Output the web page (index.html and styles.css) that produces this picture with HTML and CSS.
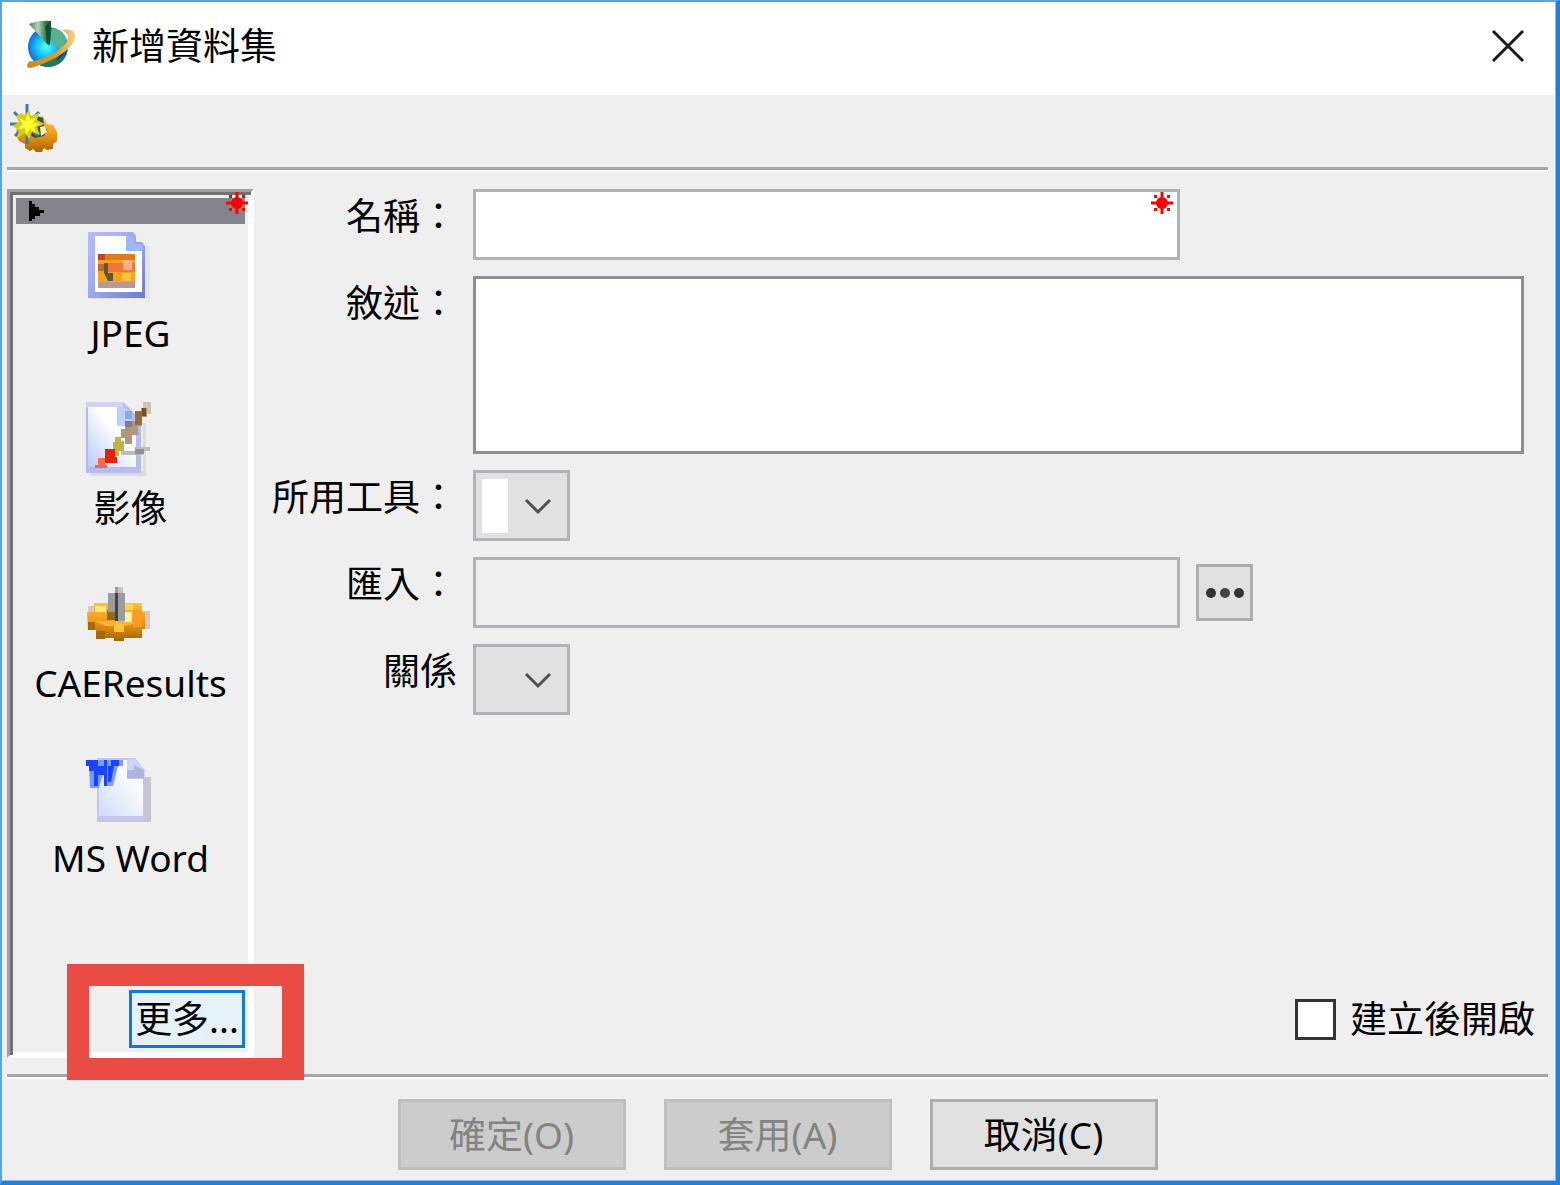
FILE: index.html
```html
<!DOCTYPE html>
<html lang="zh-Hant">
<head>
    <meta charset="UTF-8">
    <title>新增資料集</title>
    <link rel="stylesheet" href="styles.css">
</head>
<body>
<form class="dialog">
    <header class="titlebar">
        <svg class="app-icon" width="54" height="54" viewBox="0 0 54 54">
            <defs>
                <radialGradient id="globe" cx="45%" cy="50%" r="60%">
                    <stop offset="0" stop-color="#5ffaff"/>
                    <stop offset=".4" stop-color="#12c4f5"/>
                    <stop offset=".8" stop-color="#0a62d8"/>
                    <stop offset="1" stop-color="#0a3f98"/>
                </radialGradient>
                <linearGradient id="ring">
                    <stop offset="0" stop-color="#c98a20"/>
                    <stop offset=".6" stop-color="#dc9a28"/>
                    <stop offset="1" stop-color="#f8d08c"/>
                </linearGradient>
                <linearGradient id="cone">
                    <stop offset="0" stop-color="#3d7d50"/>
                    <stop offset=".4" stop-color="#b4d2b8"/>
                    <stop offset=".7" stop-color="#4f8a5c"/>
                    <stop offset="1" stop-color="#0d4a25"/>
                </linearGradient>
            </defs>
            <circle cx="24" cy="28" r="20" fill="url(#globe)"/>
            <path d="M28 9q11 1 15 12l-6 9-8-4-3-9z" fill="#55b48c"/>
            <path d="M15 44q12-2 20-9l6 2q-8 12-19 11z" fill="#227a50"/>
            <path d="M32 42q7-4 10-12l-6 5z" fill="#0a3f98"/>
            <path d="M38 11q13-2 13 6 0 10-18 21-17 9-27 11l-3-1q0-4 3-6 6 1 20-6 18-10 18-18 0-4-6-7z" fill="url(#ring)"/>
            <path d="M5 5q10-4 22-3l-1 24-3-1z" fill="url(#cone)"/>
            <path d="M21 7l6-5-1 24-3-1z" fill="#0f5229"/>
        </svg>
        <h1>新增資料集</h1>
        <button type="button" class="close" aria-label="關閉">
            <svg width="34" height="34" viewBox="0 0 34 34">
                <path d="M2 2l30 30M32 2L2 32" stroke="#1c1c1c" stroke-width="3"/>
            </svg>
        </button>
    </header>

    <div class="toolbar">
        <svg width="50" height="50" viewBox="0 0 50 50">
            <defs>
                <linearGradient id="gold" x2="0" y2="1">
                    <stop offset="0" stop-color="#ffc536"/>
                    <stop offset=".5" stop-color="#f09a18"/>
                    <stop offset="1" stop-color="#a86405"/>
                </linearGradient>
            </defs>
            <path d="M8 22l8-5 18-5 4 8 6 1 4 7v9l-4 3v5l-6 1-3-2-2 4h-6l-3-3-3 2-5-3v-4l-6-3-3-6z" fill="url(#gold)"/>
            <path d="M28 12l6 2 1 7 3 5-3 6-9 2-8-5z" fill="#344e58"/>
            <path d="M31 23l5-1 2 6-6 4z" fill="#fff4b5"/>
            <path d="M18 0v40M1 20h34M5 8l24 24M30 8L6 32" stroke="#397daa" stroke-width="3"/>
            <path d="M12 9l4 2 4-5 2 6 8-3-2 7 7 4-7 3 3 8-8-3-3 7-4-6-8 5 2-8-7-4 7-4-3-6z" fill="#d8ce1a"/>
            <path d="M19 9l2 7 6-3-3 6 7 1-6 3 2 6-6-4-4 6-1-7-7 1 5-5-4-6 6 3z" fill="#ffff30"/>
        </svg>
    </div>

    <main class="content">
        <aside class="types">
            <div class="types-head">
                <svg width="18" height="20" viewBox="0 0 18 20">
                    <path d="M1 0h3v3h3v3h4v3h5v3h-4v3H7v3H4v2H1z" fill="#000"/>
                </svg>
                <svg class="required" width="22" height="22" viewBox="0 0 22 22">
                    <path d="M11 0v22M0 11h22" stroke="#f00" stroke-width="3"/>
                    <path d="M3 3h3v3H3zM16 3h3v3h-3zM3 16h3v3H3zM16 16h3v3h-3z" fill="#f00"/>
                    <circle cx="11" cy="11" r="6" fill="#f00"/>
                </svg>
            </div>
            <ul class="type-list">
                <li>
                    <svg width="92" height="82" viewBox="0 0 92 82">
                        <defs>
                            <linearGradient id="frame" x2="1" y2="1">
                                <stop offset="0" stop-color="#b9bcfa"/>
                                <stop offset=".5" stop-color="#9ba6f2"/>
                                <stop offset="1" stop-color="#6c7cc4"/>
                            </linearGradient>
                        </defs>
                        <path d="M58 20h7v53H8v-3h50z" fill="#e4e4e6"/>
                        <path d="M3 6h45l3 4v6h6l3 4v52H3z" fill="url(#frame)"/>
                        <path d="M10 10h31v15h16v41H10z" fill="#fff"/>
                        <path d="M41 10h8v8h9v7H41z" fill="#9db8f8"/>
                        <path d="M13 28h37v34H13z" fill="#f7a21c"/>
                        <path d="M13 28h37v6H13z" fill="#df7d1c"/>
                        <path d="M13 28h7v6h-7z" fill="#c2442c"/>
                        <path d="M13 38h8v7h-8z" fill="#c86c1c"/>
                        <path d="M23 37h27v9H23z" fill="#f2763a"/>
                        <path d="M38 34h9v10h-9z" fill="#fab090"/>
                        <path d="M19 37h4v10h5v8h-5l-4-8z" fill="#5c5840"/>
                        <path d="M37 47h9v8h-9z" fill="#fcc044"/>
                        <path d="M13 56h37v6H13z" fill="#b99a90"/>
                    </svg>
                    <span>JPEG</span>
                </li>
                <li>
                    <svg width="92" height="82" viewBox="0 0 92 82">
                        <defs>
                            <linearGradient id="paper" x1="1" y1="0" x2="0" y2="1">
                                <stop offset=".4" stop-color="#fff"/>
                                <stop offset="1" stop-color="#bccbfa"/>
                            </linearGradient>
                        </defs>
                        <path d="M4 70h54V22h3v53H6z" fill="#dcdce0"/>
                        <path d="M1 1h37l18 18v53H1z" fill="#b4bcf0"/>
                        <path d="M1 1h37v5H1z" fill="#d2d4f6"/>
                        <path d="M3 6h32v18h16v42H3z" fill="url(#paper)"/>
                        <path d="M32 6h6l9 5v14H32z" fill="#b9cffc"/>
                        <path d="M40 10h7v8h-7z" fill="#8aa9df"/>
                        <path d="M36 50h14v-4h15v4h-7v4H36z" fill="#bcbcc0"/>
                        <path d="M50 48h9v5h-9z" fill="#909094"/>
                        <path d="M58 1h8v12h-8z" fill="#cdc2b6"/>
                        <path d="M50 10h6V7h6v9h-5v9h-4v9h-6v9h-7v-6h-4v-9h4v-8h10z" fill="#b4957c"/>
                        <path d="M50 10h7v14h-7z" fill="#986a3e"/>
                        <path d="M57 7h4v8h-4z" fill="#7c4c22"/>
                        <path d="M40 20h7v6h-7z" fill="#807a98"/>
                        <path d="M30 36h6v4h3v10h-5v5h-6V41h2z" fill="#bcb545"/>
                        <path d="M20 48h10v8h2v6H20z" fill="#e62208"/>
                        <path d="M13 57h7v8h-7z" fill="#fb6b45"/>
                        <path d="M10 64h12v3H10z" fill="#ef6060"/>
                    </svg>
                    <span>影像</span>
                </li>
                <li>
                    <svg width="92" height="82" viewBox="0 -10 92 82">
                        <path d="M3 20h6v22H3zM56 25h9v18h-7z" fill="#d3c8c4"/>
                        <path d="M2 26h7v-9h14v-2h12v2h22v9h3v17h-3v9H39v3H29v-3H11V44H3z" fill="url(#gold)"/>
                        <path d="M10 20h11v6H10z" fill="#ffe871"/>
                        <path d="M3 36h7v8H3zM11 45h9v8h-9z" fill="#a16a0b"/>
                        <path d="M10 35h38v3l-9 2H21z" fill="#f3b832"/>
                        <path d="M22 24h11v10H22z" fill="#8d6d24"/>
                        <path d="M39 18h9v6h-9z" fill="#ffd540"/>
                        <path d="M39 26h8v10h-8z" fill="#fff3a0"/>
                        <path d="M48 24h9v17h-9z" fill="#fa9c24"/>
                        <path d="M29 38h10v8H29z" fill="#ffc53a"/>
                        <path d="M23 7h7V1h8v6h2v28H30v-9h-7z" fill="#9b9b9d"/>
                        <path d="M30 7h3v28h-3z" fill="#444"/>
                        <path d="M33 1h5v6h-5z" fill="#c3c3c5"/>
                    </svg>
                    <span>CAEResults</span>
                </li>
                <li>
                    <svg width="92" height="82" viewBox="0 0 92 82">
                        <defs>
                            <linearGradient id="page" x1="1" y1="0" x2="0" y2="1">
                                <stop offset=".3" stop-color="#fbfbff"/>
                                <stop offset="1" stop-color="#cddcfa"/>
                            </linearGradient>
                        </defs>
                        <path d="M58 26h8v45h-8z" fill="#c7c7cb"/>
                        <path d="M12 7h38l10 12v52H12z" fill="#c5c6ea"/>
                        <path d="M14 9h28v19h16v37H14z" fill="url(#page)"/>
                        <path d="M42 8h8l10 11v8H42z" fill="#ccd2f8"/>
                        <path d="M49 14l10 5v8H42v-8h7z" fill="#adb4de"/>
                        <path d="M1 9h37v6h-5l-5 20h-7l-3-12-4 14H5L4 15H1z" fill="#7a9afc"/>
                        <path d="M1 9h12v6h6V9h3v26h-3V24h-6v11H9V20H4v-5H1zM26 9h8v6h-5l-3 16h-3V15h3z" fill="#1a44fb"/>
                    </svg>
                    <span>MS Word</span>
                </li>
            </ul>
            <div class="more">
                <button type="button">更多...</button>
                <div class="highlight"></div>
            </div>
        </aside>

        <section class="details">
            <div class="fields">
                <label for="name">名稱：</label>
                <div class="name-field">
                    <input type="text" id="name">
                    <svg class="required" width="22" height="22" viewBox="0 0 22 22">
                        <path d="M11 0v22M0 11h22" stroke="#f00" stroke-width="3"/>
                        <path d="M3 3h3v3H3zM16 3h3v3h-3zM3 16h3v3H3zM16 16h3v3h-3z" fill="#f00"/>
                        <circle cx="11" cy="11" r="6" fill="#f00"/>
                    </svg>
                </div>

                <label for="description">敘述：</label>
                <textarea id="description"></textarea>

                <label for="tool">所用工具：</label>
                <div class="select">
                    <select id="tool" class="with-value">
                        <option value=""></option>
                    </select>
                    <svg width="28" height="18" viewBox="0 0 28 18">
                        <path d="M2 2l12 12L26 2" fill="none" stroke="#505050" stroke-width="3"/>
                    </svg>
                </div>

                <label for="import">匯入：</label>
                <input type="text" id="import" disabled>
                <button type="button" class="browse" aria-label="瀏覽">
                    <svg width="40" height="12" viewBox="0 0 40 12">
                        <circle cx="6" cy="6" r="5" fill="#333"/>
                        <circle cx="20" cy="6" r="5" fill="#444"/>
                        <circle cx="34" cy="6" r="5" fill="#333"/>
                    </svg>
                </button>

                <label for="relation">關係</label>
                <div class="select">
                    <select id="relation">
                        <option value=""></option>
                    </select>
                    <svg width="28" height="18" viewBox="0 0 28 18">
                        <path d="M2 2l12 12L26 2" fill="none" stroke="#505050" stroke-width="3"/>
                    </svg>
                </div>
            </div>
            <div class="open-after">
                <input type="checkbox" id="open">
                <label for="open">建立後開啟</label>
            </div>
        </section>
    </main>

    <footer class="actions">
        <button type="submit" disabled>確定(O)</button>
        <button type="button" disabled>套用(A)</button>
        <button type="button">取消(C)</button>
    </footer>
</form>
</body>
</html>
```
FILE: styles.css
```css
* {
    margin: 0;
    padding: 0;
    box-sizing: border-box;
}

body,
button,
input,
select,
textarea {
    font-family: "Noto Sans", "Noto Sans CJK TC", sans-serif;
    font-size: 37px;
    line-height: 54px;
    color: #000;
}

button,
input,
select,
textarea {
    border-radius: 0;
    outline: none;
}

svg {
    display: block;
}

.dialog {
    display: flex;
    flex-direction: column;
    min-height: 100vh;
    background-color: #efefef;
    border: 2px solid #55a5e8;
    border-right: 4px solid #1a82dc;
    border-bottom: 4px solid #1a82dc;
    box-shadow: inset -1px -1px #8cbfee;
}

.titlebar {
    display: flex;
    align-items: center;
    height: 93px;
    padding: 0 30px 6px 22px;
    margin-right: 1px;
    background-color: #fff;
}

.titlebar h1 {
    flex: 1;
    margin-left: 14px;
    font-size: 37px;
    font-weight: 400;
    line-height: 54px;
}

.close {
    border: none;
    background: none;
}

.toolbar {
    height: 77px;
    margin: 0 8px 0 5px;
    padding: 9px 2px;
    border-bottom: 2px solid #fff;
    box-shadow: inset 0 -3px #a6a6a6;
}

.content {
    flex: 1;
    display: flex;
    margin: 0 8px 0 5px;
    padding: 17px 0 16px;
}

.required {
    position: absolute;
}

.types {
    display: flex;
    flex-direction: column;
    width: 247px;
    padding: 3px;
    border: 3px solid;
    border-color: #a0a0a0 #fff #fff #a0a0a0;
    box-shadow: inset 3px 3px #717171, inset -3px -3px #fff;
}

.types-head {
    position: relative;
    display: flex;
    align-items: center;
    height: 26px;
    margin: 3px 3px 0;
    padding-left: 12px;
    background-color: #84848c;
}

.types-head .required {
    top: -6px;
    right: -3px;
}

.type-list {
    display: flex;
    flex-direction: column;
    gap: 43px;
    padding-top: 2px;
    list-style: none;
}

.type-list li {
    display: flex;
    flex-direction: column;
    align-items: center;
    line-height: 50px;
}

.more {
    position: relative;
    align-self: flex-end;
    margin: auto 3px 4px 0;
}

.more button {
    display: block;
    width: 116px;
    height: 58px;
    border: 3px solid #0f7bd7;
    background-color: #e5f1fb;
    line-height: 52px;
}

.highlight {
    position: absolute;
    top: -26px;
    right: -59px;
    bottom: -32px;
    left: -62px;
    border: 22px solid #ea4b45;
    pointer-events: none;
}

.details {
    flex: 1;
    display: flex;
    flex-direction: column;
    justify-content: space-between;
}

.fields {
    display: grid;
    grid-template-columns: 203px 1fr 328px;
    gap: 16px;
    align-items: start;
    padding-right: 24px;
}

.fields label {
    grid-column: 1;
    text-align: right;
}

.fields input,
.fields textarea {
    display: block;
    width: 100%;
    height: 71px;
    padding: 0 8px;
    border: 3px solid #b1b2b9;
    background-color: #fff;
}

.fields input:disabled {
    background-color: #efefef;
}

.fields textarea {
    grid-column: 2 / 4;
    height: 178px;
    border-color: #8a8e97;
    resize: none;
}

.name-field {
    position: relative;
}

.name-field .required {
    top: 3px;
    right: 7px;
}

.select {
    position: relative;
    width: 97px;
}

.select select {
    display: block;
    width: 100%;
    height: 71px;
    border: 3px solid #b1b2b9;
    background: #e1e1e1;
    appearance: none;
}

.select .with-value {
    background: linear-gradient(#fff, #fff) 6px 6px / 26px 54px no-repeat #e1e1e1;
}

.select svg {
    position: absolute;
    top: 28px;
    right: 18px;
    pointer-events: none;
}

.browse {
    display: flex;
    align-items: center;
    justify-content: center;
    align-self: center;
    width: 57px;
    height: 57px;
    border: 3px solid #adadad;
    background-color: #e1e1e1;
}

.open-after {
    display: flex;
    align-items: center;
    justify-content: flex-end;
    gap: 14px;
    padding: 0 13px 12px 0;
}

.open-after input {
    width: 41px;
    height: 41px;
    border: 3px solid #333;
    background-color: #fff;
    appearance: none;
}

.actions {
    display: flex;
    justify-content: center;
    gap: 38px;
    margin: 0 8px 0 5px;
    padding: 22px 0 11px;
    border-top: 3px solid #a6a6a6;
    box-shadow: inset 0 2px #fff;
}

.actions button {
    width: 228px;
    height: 71px;
    border: 3px solid #adadad;
    background-color: #e1e1e1;
}

.actions button:disabled {
    border-color: #bfbfbf;
    background-color: #ccc;
    color: #838383;
}
```
